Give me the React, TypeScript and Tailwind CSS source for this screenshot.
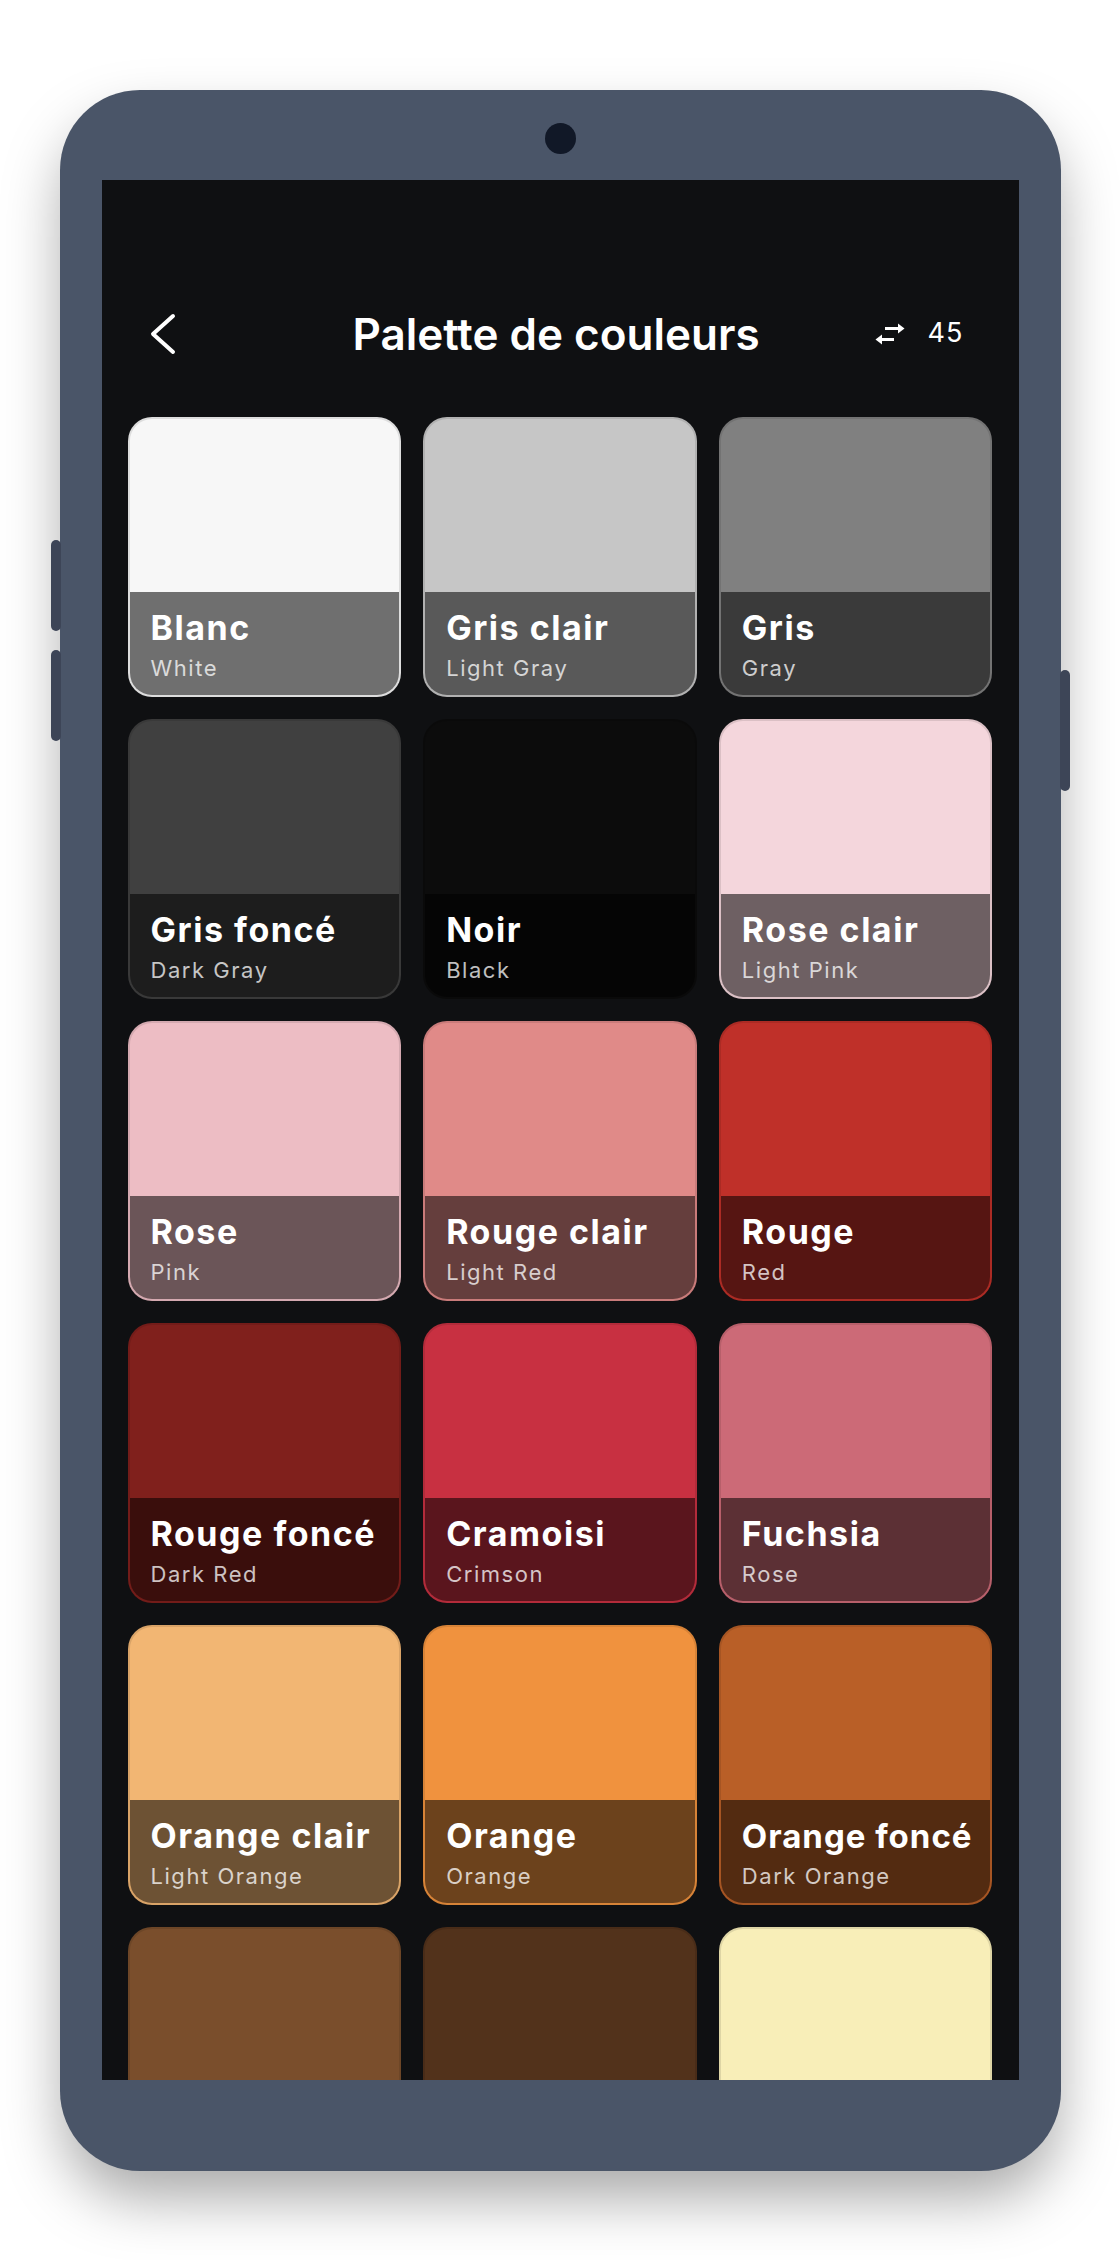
const swatches = [
  { fr: "Blanc", en: "White", color: "#f7f7f7" },
  { fr: "Gris clair", en: "Light Gray", color: "#c6c6c6" },
  { fr: "Gris", en: "Gray", color: "#808080" },
  { fr: "Gris foncé", en: "Dark Gray", color: "#404040" },
  { fr: "Noir", en: "Black", color: "#0c0c0c" },
  { fr: "Rose clair", en: "Light Pink", color: "#f4d6dc" },
  { fr: "Rose", en: "Pink", color: "#edbdc4" },
  { fr: "Rouge clair", en: "Light Red", color: "#e08a88" },
  { fr: "Rouge", en: "Red", color: "#bf3029" },
  { fr: "Rouge foncé", en: "Dark Red", color: "#80201c" },
  { fr: "Cramoisi", en: "Crimson", color: "#c83041" },
  { fr: "Fuchsia", en: "Rose", color: "#cc6a77" },
  { fr: "Orange clair", en: "Light Orange", color: "#f2b673" },
  { fr: "Orange", en: "Orange", color: "#f0923e" },
  { fr: "Orange foncé", en: "Dark Orange", color: "#b95f27", small: true },
  { fr: "Marron clair", en: "Light Brown", color: "#7a4e2c" },
  { fr: "Marron", en: "Brown", color: "#52321b" },
  { fr: "Crème", en: "Cream", color: "#f8eeb8" },
];

function SwatchCard({ fr, en, color, small }: { fr: string; en: string; color: string; small?: boolean }) {
  return (
    <div
      className="h-[280px] rounded-[24px] border-2 border-black/10 overflow-hidden flex flex-col"
      style={{ backgroundColor: color }}
    >
      <div className="flex-1" />
      <div className="h-[103px] bg-black/55 pl-[21px] pt-[16px]">
        <div
          className={`font-bold text-white leading-[40px] whitespace-nowrap ${
            small ? "text-[33px] tracking-[0.03em]" : "text-[34px] tracking-[0.045em]"
          }`}
        >
          {fr}
        </div>
        <div className="mt-[7px] text-[22px] leading-[26px] text-white/75 tracking-[0.07em]">{en}</div>
      </div>
    </div>
  );
}

function SwapIcon() {
  return (
    <svg width="30" height="22" viewBox="0 0 30 22" fill="none">
      <path d="M10 5.5H24" stroke="white" strokeWidth="3" />
      <path d="M23 0.5L29.5 5.5L23 10.5Z" fill="white" />
      <path d="M6 16.5H19" stroke="white" strokeWidth="3" />
      <path d="M7 11.5L0.5 16.5L7 21.5Z" fill="white" />
    </svg>
  );
}

export default function App() {
  return (
    <div className="min-h-[2260px] bg-white flex justify-center pt-[90px] font-['Inter',sans-serif]">
      <div className="relative w-[1001px] h-[2081px] rounded-[80px] bg-[#4a5568] shadow-[0_30px_60px_-4px_rgba(0,0,0,0.35)] px-[42px]">
        {/* side buttons */}
        <div className="absolute left-[-9px] top-[450px] w-[10px] h-[91px] rounded-full bg-[#3d4557]" />
        <div className="absolute left-[-9px] top-[560px] w-[10px] h-[91px] rounded-full bg-[#3d4557]" />
        <div className="absolute right-[-9px] top-[580px] w-[10px] h-[121px] rounded-full bg-[#3d4557]" />

        <div className="h-[90px] flex justify-center pt-[33px]">
          <div className="w-[31px] h-[31px] rounded-full bg-[#111827]" />
        </div>

        <div className="h-[1900px] bg-[#0f1012] overflow-hidden">
          <div className="mt-[113px] h-[81px] grid grid-cols-[1fr_auto_1fr] items-center pl-[47px] pr-[55px]">
            <div>
              <svg width="28" height="44" viewBox="0 0 28 44" fill="none">
                <polyline
                  points="24,4 4,22 24,40"
                  stroke="white"
                  strokeWidth="4"
                  strokeLinecap="round"
                  strokeLinejoin="round"
                />
              </svg>
            </div>
            <h1 className="text-[44px] font-semibold text-white">Palette de couleurs</h1>
            <div className="flex items-center justify-end gap-[22px]">
              <SwapIcon />
              <span className="text-[27px] text-white tracking-[0.04em]">45</span>
            </div>
          </div>

          <div className="mt-[43px] px-[26px] grid grid-cols-3 gap-x-[22px] gap-y-[22px]">
            {swatches.map((s) => (
              <SwatchCard key={s.fr} {...s} />
            ))}
          </div>
        </div>
      </div>
    </div>
  );
}
